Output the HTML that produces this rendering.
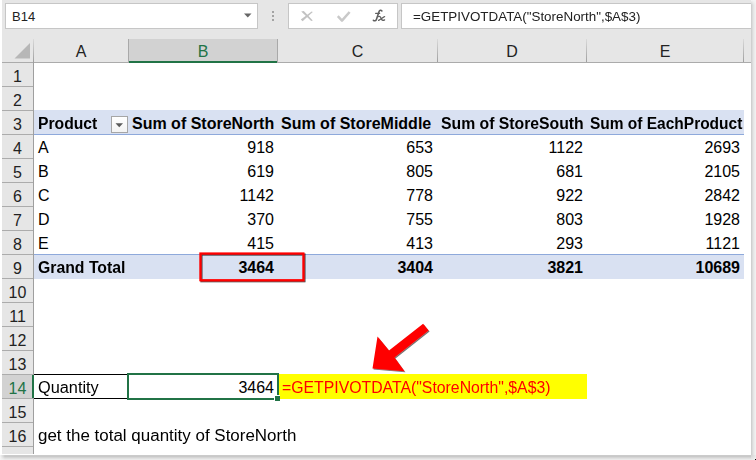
<!DOCTYPE html><html><head><meta charset="utf-8"><style>
html,body{margin:0;padding:0;width:756px;height:460px;overflow:hidden;background:#fff;}
#r{position:absolute;left:0;top:0;width:756px;height:460px;overflow:hidden;}
</style></head><body><div id="r">
<div style="position:absolute;left:2px;top:0px;width:749px;height:39px;background:#e6e6e6;"></div>
<div style="position:absolute;left:5px;top:3px;width:251px;height:24px;border:1px solid #c6c6c6;background:#fff"></div>
<div style="position:absolute;left:12px;transform-origin:0 0;top:10px;font:normal 13px/13px 'Liberation Sans',sans-serif;color:#222;white-space:nowrap;">B14</div>
<svg style="position:absolute;left:243px;top:12px" width="10" height="7"><path d="M1 1.5 L8.5 1.5 L4.75 5.5 Z" fill="#666"/></svg>
<div style="position:absolute;left:272px;top:11px;width:2px;height:2px;background:#a3a3a3;"></div>
<div style="position:absolute;left:272px;top:15px;width:2px;height:2px;background:#a3a3a3;"></div>
<div style="position:absolute;left:272px;top:19px;width:2px;height:2px;background:#a3a3a3;"></div>
<div style="position:absolute;left:288px;top:3px;width:108px;height:24px;border:1px solid #c6c6c6;background:#fff"></div>
<svg style="position:absolute;left:0;top:0" width="400" height="30"><path d="M301.2 11.6 L303.8 11.0 L312.8 20.4 L311.2 21.1 Z" fill="#c2c2c2"/><path d="M312.8 11.9 L311.6 11.4 L300.8 19.6 L302.6 21.2 Z" fill="#c2c2c2"/><path d="M337.8 16.2 L342 20.6 L349.6 12" stroke="#c9c9c9" stroke-width="2.5" fill="none" stroke-linejoin="round"/></svg>
<svg style="position:absolute;left:368px;top:6px" width="22" height="18"><g fill="none" stroke="#5f5f5f" stroke-linecap="round"><path d="M13.9 4.9 C13.1 3.9 11.6 4.0 11.1 5.5 L8.4 13.5 C7.9 14.9 6.4 15.1 5.4 14.3" stroke-width="1.6"/><path d="M7.6 7.3 L11.7 7.3" stroke-width="1.2"/><path d="M10.6 10.6 C11.6 10.2 12.4 10.7 12.9 11.8 L13.8 13.6 C14.3 14.6 15.4 14.6 16.6 13.9" stroke-width="1.3"/><path d="M16.6 10.6 C15.6 10.7 13.6 12.6 10.6 14.4" stroke-width="1.3"/></g></svg>
<div style="position:absolute;left:401px;top:3px;width:349px;height:24px;border:1px solid #c6c6c6;border-right:none;background:#fff"></div>
<div style="position:absolute;left:413px;transform-origin:0 0;top:10px;font:normal 13px/13px 'Liberation Sans',sans-serif;color:#222;white-space:nowrap;transform:scaleX(1.03);">=GETPIVOTDATA("StoreNorth",$A$3)</div>
<div style="position:absolute;left:2px;top:39px;width:749px;height:23px;background:#e6e6e6;"></div>
<div style="position:absolute;left:2px;top:62px;width:749px;height:1px;background:#ababab;"></div>
<svg style="position:absolute;left:13px;top:42px" width="19" height="18"><path d="M1.5 16.5 L17 16.5 L17 1 Z" fill="#b7b7b7"/></svg>
<div style="position:absolute;left:129px;top:39px;width:148px;height:22px;background:#d2d2d2;"></div>
<div style="position:absolute;left:128px;top:61px;width:150px;height:2px;background:#217346;"></div>
<div style="position:absolute;left:437px;top:39px;width:1px;height:23px;background:linear-gradient(to bottom,#dadada,#9f9f9f)"></div>
<div style="position:absolute;left:586px;top:39px;width:1px;height:23px;background:linear-gradient(to bottom,#dadada,#9f9f9f)"></div>
<div style="position:absolute;left:743px;top:39px;width:1px;height:23px;background:linear-gradient(to bottom,#dadada,#9f9f9f)"></div>
<div style="position:absolute;left:128px;top:39px;width:1px;height:24px;background:#a9a9a9;"></div>
<div style="position:absolute;left:277px;top:39px;width:1px;height:24px;background:#a9a9a9;"></div>
<div style="position:absolute;left:34px;width:94px;top:44px;text-align:center;font:16px/16px 'Liberation Sans',sans-serif;color:#222">A</div>
<div style="position:absolute;left:129px;width:148px;top:44px;text-align:center;font:16px/16px 'Liberation Sans',sans-serif;color:#217346">B</div>
<div style="position:absolute;left:278px;width:159px;top:44px;text-align:center;font:16px/16px 'Liberation Sans',sans-serif;color:#222">C</div>
<div style="position:absolute;left:438px;width:148px;top:44px;text-align:center;font:16px/16px 'Liberation Sans',sans-serif;color:#222">D</div>
<div style="position:absolute;left:587px;width:156px;top:44px;text-align:center;font:16px/16px 'Liberation Sans',sans-serif;color:#222">E</div>
<div style="position:absolute;left:2px;top:63px;width:31px;height:391px;background:#e6e6e6;"></div>
<div style="position:absolute;left:33px;top:39px;width:1px;height:23px;background:linear-gradient(to bottom,#dadada,#9f9f9f)"></div>
<div style="position:absolute;left:33px;top:62px;width:1px;height:392px;background:#9f9f9f;"></div>
<div style="position:absolute;left:2px;top:86px;width:31px;height:1px;background:#acacac;"></div>
<div style="position:absolute;left:2px;top:110px;width:31px;height:1px;background:#acacac;"></div>
<div style="position:absolute;left:2px;top:134px;width:31px;height:1px;background:#acacac;"></div>
<div style="position:absolute;left:2px;top:158px;width:31px;height:1px;background:#acacac;"></div>
<div style="position:absolute;left:2px;top:182px;width:31px;height:1px;background:#acacac;"></div>
<div style="position:absolute;left:2px;top:206px;width:31px;height:1px;background:#acacac;"></div>
<div style="position:absolute;left:2px;top:230px;width:31px;height:1px;background:#acacac;"></div>
<div style="position:absolute;left:2px;top:254px;width:31px;height:1px;background:#acacac;"></div>
<div style="position:absolute;left:2px;top:278px;width:31px;height:1px;background:#acacac;"></div>
<div style="position:absolute;left:2px;top:302px;width:31px;height:1px;background:#acacac;"></div>
<div style="position:absolute;left:2px;top:326px;width:31px;height:1px;background:#acacac;"></div>
<div style="position:absolute;left:2px;top:350px;width:31px;height:1px;background:#acacac;"></div>
<div style="position:absolute;left:2px;top:374px;width:31px;height:1px;background:#acacac;"></div>
<div style="position:absolute;left:2px;top:398px;width:31px;height:1px;background:#acacac;"></div>
<div style="position:absolute;left:2px;top:422px;width:31px;height:1px;background:#acacac;"></div>
<div style="position:absolute;left:2px;top:446px;width:31px;height:1px;background:#acacac;"></div>
<div style="position:absolute;left:2px;top:375px;width:30px;height:23px;background:#d2d2d2;"></div>
<div style="position:absolute;left:32px;top:375px;width:2px;height:23px;background:#217346;"></div>
<div style="position:absolute;left:2px;width:31px;top:69px;text-align:center;font:16px/16px 'Liberation Sans',sans-serif;color:#222">1</div>
<div style="position:absolute;left:2px;width:31px;top:93px;text-align:center;font:16px/16px 'Liberation Sans',sans-serif;color:#222">2</div>
<div style="position:absolute;left:2px;width:31px;top:117px;text-align:center;font:16px/16px 'Liberation Sans',sans-serif;color:#222">3</div>
<div style="position:absolute;left:2px;width:31px;top:141px;text-align:center;font:16px/16px 'Liberation Sans',sans-serif;color:#222">4</div>
<div style="position:absolute;left:2px;width:31px;top:165px;text-align:center;font:16px/16px 'Liberation Sans',sans-serif;color:#222">5</div>
<div style="position:absolute;left:2px;width:31px;top:189px;text-align:center;font:16px/16px 'Liberation Sans',sans-serif;color:#222">6</div>
<div style="position:absolute;left:2px;width:31px;top:213px;text-align:center;font:16px/16px 'Liberation Sans',sans-serif;color:#222">7</div>
<div style="position:absolute;left:2px;width:31px;top:237px;text-align:center;font:16px/16px 'Liberation Sans',sans-serif;color:#222">8</div>
<div style="position:absolute;left:2px;width:31px;top:261px;text-align:center;font:16px/16px 'Liberation Sans',sans-serif;color:#222">9</div>
<div style="position:absolute;left:2px;width:31px;top:285px;text-align:center;font:16px/16px 'Liberation Sans',sans-serif;color:#222">10</div>
<div style="position:absolute;left:2px;width:31px;top:309px;text-align:center;font:16px/16px 'Liberation Sans',sans-serif;color:#222">11</div>
<div style="position:absolute;left:2px;width:31px;top:333px;text-align:center;font:16px/16px 'Liberation Sans',sans-serif;color:#222">12</div>
<div style="position:absolute;left:2px;width:31px;top:357px;text-align:center;font:16px/16px 'Liberation Sans',sans-serif;color:#222">13</div>
<div style="position:absolute;left:2px;width:31px;top:381px;text-align:center;font:16px/16px 'Liberation Sans',sans-serif;color:#217346">14</div>
<div style="position:absolute;left:2px;width:31px;top:405px;text-align:center;font:16px/16px 'Liberation Sans',sans-serif;color:#222">15</div>
<div style="position:absolute;left:2px;width:31px;top:429px;text-align:center;font:16px/16px 'Liberation Sans',sans-serif;color:#222">16</div>
<div style="position:absolute;left:2px;top:454px;width:749px;height:1px;background:#ffffff;"></div>
<div style="position:absolute;left:34px;top:110px;width:710px;height:24px;background:#d9e1f2;"></div>
<div style="position:absolute;left:34px;top:134px;width:710px;height:1px;background:#8ea9db;"></div>
<div style="position:absolute;left:34px;top:254px;width:710px;height:1px;background:#8ea9db;"></div>
<div style="position:absolute;left:34px;top:255px;width:710px;height:24px;background:#d9e1f2;"></div>
<div style="position:absolute;left:111px;top:116px;width:15px;height:15px;border:1px solid #a6a6a6;background:linear-gradient(#ffffff,#f3f3f3)"></div>
<svg style="position:absolute;left:115px;top:122px" width="9" height="7"><path d="M0.5 1.2 L8 1.2 L4.25 5.3 Z" fill="#5a5a5a"/></svg>
<div style="position:absolute;left:38px;transform-origin:0 0;top:116px;font:bold 16px/16px 'Liberation Sans',sans-serif;color:#000;white-space:nowrap;transform:scaleX(0.98);">Product</div>
<div style="position:absolute;left:132px;transform-origin:0 0;top:116px;font:bold 16px/16px 'Liberation Sans',sans-serif;color:#000;white-space:nowrap;">Sum of StoreNorth</div>
<div style="position:absolute;left:281px;transform-origin:0 0;top:116px;font:bold 16px/16px 'Liberation Sans',sans-serif;color:#000;white-space:nowrap;">Sum of StoreMiddle</div>
<div style="position:absolute;left:441px;transform-origin:0 0;top:116px;font:bold 16px/16px 'Liberation Sans',sans-serif;color:#000;white-space:nowrap;transform:scaleX(0.985);">Sum of StoreSouth</div>
<div style="position:absolute;left:590px;transform-origin:0 0;top:116px;font:bold 16px/16px 'Liberation Sans',sans-serif;color:#000;white-space:nowrap;transform:scaleX(0.968);">Sum of EachProduct</div>
<div style="position:absolute;left:38px;transform-origin:0 0;top:140px;font:normal 16px/16px 'Liberation Sans',sans-serif;color:#000;white-space:nowrap;">A</div>
<div style="position:absolute;right:482px;transform-origin:100% 0;top:140px;font:normal 16px/16px 'Liberation Sans',sans-serif;color:#000;white-space:nowrap;">918</div>
<div style="position:absolute;right:323px;transform-origin:100% 0;top:140px;font:normal 16px/16px 'Liberation Sans',sans-serif;color:#000;white-space:nowrap;">653</div>
<div style="position:absolute;right:173px;transform-origin:100% 0;top:140px;font:normal 16px/16px 'Liberation Sans',sans-serif;color:#000;white-space:nowrap;">1122</div>
<div style="position:absolute;right:16px;transform-origin:100% 0;top:140px;font:normal 16px/16px 'Liberation Sans',sans-serif;color:#000;white-space:nowrap;">2693</div>
<div style="position:absolute;left:38px;transform-origin:0 0;top:164px;font:normal 16px/16px 'Liberation Sans',sans-serif;color:#000;white-space:nowrap;">B</div>
<div style="position:absolute;right:482px;transform-origin:100% 0;top:164px;font:normal 16px/16px 'Liberation Sans',sans-serif;color:#000;white-space:nowrap;">619</div>
<div style="position:absolute;right:323px;transform-origin:100% 0;top:164px;font:normal 16px/16px 'Liberation Sans',sans-serif;color:#000;white-space:nowrap;">805</div>
<div style="position:absolute;right:173px;transform-origin:100% 0;top:164px;font:normal 16px/16px 'Liberation Sans',sans-serif;color:#000;white-space:nowrap;">681</div>
<div style="position:absolute;right:16px;transform-origin:100% 0;top:164px;font:normal 16px/16px 'Liberation Sans',sans-serif;color:#000;white-space:nowrap;">2105</div>
<div style="position:absolute;left:38px;transform-origin:0 0;top:188px;font:normal 16px/16px 'Liberation Sans',sans-serif;color:#000;white-space:nowrap;">C</div>
<div style="position:absolute;right:482px;transform-origin:100% 0;top:188px;font:normal 16px/16px 'Liberation Sans',sans-serif;color:#000;white-space:nowrap;">1142</div>
<div style="position:absolute;right:323px;transform-origin:100% 0;top:188px;font:normal 16px/16px 'Liberation Sans',sans-serif;color:#000;white-space:nowrap;">778</div>
<div style="position:absolute;right:173px;transform-origin:100% 0;top:188px;font:normal 16px/16px 'Liberation Sans',sans-serif;color:#000;white-space:nowrap;">922</div>
<div style="position:absolute;right:16px;transform-origin:100% 0;top:188px;font:normal 16px/16px 'Liberation Sans',sans-serif;color:#000;white-space:nowrap;">2842</div>
<div style="position:absolute;left:38px;transform-origin:0 0;top:212px;font:normal 16px/16px 'Liberation Sans',sans-serif;color:#000;white-space:nowrap;">D</div>
<div style="position:absolute;right:482px;transform-origin:100% 0;top:212px;font:normal 16px/16px 'Liberation Sans',sans-serif;color:#000;white-space:nowrap;">370</div>
<div style="position:absolute;right:323px;transform-origin:100% 0;top:212px;font:normal 16px/16px 'Liberation Sans',sans-serif;color:#000;white-space:nowrap;">755</div>
<div style="position:absolute;right:173px;transform-origin:100% 0;top:212px;font:normal 16px/16px 'Liberation Sans',sans-serif;color:#000;white-space:nowrap;">803</div>
<div style="position:absolute;right:16px;transform-origin:100% 0;top:212px;font:normal 16px/16px 'Liberation Sans',sans-serif;color:#000;white-space:nowrap;">1928</div>
<div style="position:absolute;left:38px;transform-origin:0 0;top:236px;font:normal 16px/16px 'Liberation Sans',sans-serif;color:#000;white-space:nowrap;">E</div>
<div style="position:absolute;right:482px;transform-origin:100% 0;top:236px;font:normal 16px/16px 'Liberation Sans',sans-serif;color:#000;white-space:nowrap;">415</div>
<div style="position:absolute;right:323px;transform-origin:100% 0;top:236px;font:normal 16px/16px 'Liberation Sans',sans-serif;color:#000;white-space:nowrap;">413</div>
<div style="position:absolute;right:173px;transform-origin:100% 0;top:236px;font:normal 16px/16px 'Liberation Sans',sans-serif;color:#000;white-space:nowrap;">293</div>
<div style="position:absolute;right:16px;transform-origin:100% 0;top:236px;font:normal 16px/16px 'Liberation Sans',sans-serif;color:#000;white-space:nowrap;">1121</div>
<div style="position:absolute;left:38px;transform-origin:0 0;top:260px;font:bold 16px/16px 'Liberation Sans',sans-serif;color:#000;white-space:nowrap;transform:scaleX(0.987);">Grand Total</div>
<div style="position:absolute;right:482px;transform-origin:100% 0;top:260px;font:bold 16px/16px 'Liberation Sans',sans-serif;color:#000;white-space:nowrap;">3464</div>
<div style="position:absolute;right:323px;transform-origin:100% 0;top:260px;font:bold 16px/16px 'Liberation Sans',sans-serif;color:#000;white-space:nowrap;">3404</div>
<div style="position:absolute;right:173px;transform-origin:100% 0;top:260px;font:bold 16px/16px 'Liberation Sans',sans-serif;color:#000;white-space:nowrap;">3821</div>
<div style="position:absolute;right:16px;transform-origin:100% 0;top:260px;font:bold 16px/16px 'Liberation Sans',sans-serif;color:#000;white-space:nowrap;">10689</div>
<svg style="position:absolute;left:0;top:0" width="756" height="460"><defs><filter id="sh2" x="-10%" y="-10%" width="130%" height="130%"><feGaussianBlur in="SourceAlpha" stdDeviation="0.6"/><feOffset dx="1.3" dy="1.3"/><feComponentTransfer><feFuncA type="linear" slope="0.75"/></feComponentTransfer><feMerge><feMergeNode/><feMergeNode in="SourceGraphic"/></feMerge></filter></defs><rect filter="url(#sh2)" x="200.4" y="253.5" width="103" height="26.7" fill="none" stroke="#ff0000" stroke-width="2.2"/></svg>
<div style="position:absolute;left:34px;top:374px;width:94px;height:1px;background:#000;"></div>
<div style="position:absolute;left:34px;top:398px;width:94px;height:1px;background:#000;"></div>
<div style="position:absolute;left:278px;top:374px;width:309px;height:25px;background:#ffff00;"></div>
<div style="position:absolute;left:38px;transform-origin:0 0;top:380px;font:normal 16px/16px 'Liberation Sans',sans-serif;color:#000;white-space:nowrap;transform:scaleX(1.02);">Quantity</div>
<div style="position:absolute;right:482px;transform-origin:100% 0;top:380px;font:normal 16px/16px 'Liberation Sans',sans-serif;color:#000;white-space:nowrap;">3464</div>
<div style="position:absolute;left:282px;transform-origin:0 0;top:380px;font:normal 16px/16px 'Liberation Sans',sans-serif;color:#ff0000;white-space:nowrap;transform:scaleX(0.988);">=GETPIVOTDATA("StoreNorth",$A$3)</div>
<div style="position:absolute;left:127px;top:373px;width:148px;height:23px;border:2px solid #217346"></div>
<div style="position:absolute;left:274px;top:395px;width:6px;height:7px;background:#ffffff;"></div>
<div style="position:absolute;left:275px;top:396px;width:5px;height:5px;background:#217346;"></div>
<div style="position:absolute;left:38px;transform-origin:0 0;top:428px;font:normal 16px/16px 'Liberation Sans',sans-serif;color:#000;white-space:nowrap;transform:scaleX(1.06);">get the total quantity of StoreNorth</div>
<svg style="position:absolute;left:0;top:0" width="756" height="460"><defs><filter id="sh" x="-20%" y="-20%" width="150%" height="150%"><feGaussianBlur in="SourceAlpha" stdDeviation="0.6"/><feOffset dx="1.3" dy="1.3"/><feComponentTransfer><feFuncA type="linear" slope="0.55"/></feComponentTransfer><feMerge><feMergeNode/><feMergeNode in="SourceGraphic"/></feMerge></filter></defs>
<polygon filter="url(#sh)" fill="#ff0000" points="423.1,323.8 428.6,330.5 394.5,357.5 404.5,371.2 372.5,368.5 377.5,336.5 389,350.5"/></svg>
<div style="position:absolute;left:751px;top:0;width:1px;height:455px;background:linear-gradient(to bottom,#f5f5f5,#cfcfcf 5px,#cfcfcf)"></div>
<div style="position:absolute;left:752px;top:0;width:1px;height:455px;background:linear-gradient(to bottom,#f5f5f5,#dbdbdb 5px,#dbdbdb)"></div>
<div style="position:absolute;left:753px;top:0;width:1px;height:455px;background:linear-gradient(to bottom,#f5f5f5,#e5e5e5 5px,#e5e5e5)"></div>
<div style="position:absolute;left:754px;top:0;width:1px;height:455px;background:linear-gradient(to bottom,#f5f5f5,#ebebeb 5px,#ebebeb)"></div>
<div style="position:absolute;left:755px;top:0;width:1px;height:455px;background:linear-gradient(to bottom,#f5f5f5,#f0f0f0 5px,#f0f0f0)"></div>
<div style="position:absolute;left:0;top:455px;width:751px;height:1px;background:linear-gradient(to right,#f5f5f5,#cbcbcb 5px,#cbcbcb)"></div>
<div style="position:absolute;left:0;top:456px;width:751px;height:1px;background:linear-gradient(to right,#f5f5f5,#c9c9c9 5px,#c9c9c9)"></div>
<div style="position:absolute;left:0;top:457px;width:751px;height:1px;background:linear-gradient(to right,#f5f5f5,#d5d5d5 5px,#d5d5d5)"></div>
<div style="position:absolute;left:0;top:458px;width:751px;height:1px;background:linear-gradient(to right,#f5f5f5,#e0e0e0 5px,#e0e0e0)"></div>
<div style="position:absolute;left:0;top:459px;width:751px;height:1px;background:linear-gradient(to right,#f5f5f5,#eaeaea 5px,#eaeaea)"></div>
<div style="position:absolute;left:751px;top:455px;width:5px;height:5px;background:radial-gradient(circle at 0 0,#d2d2d2,#e4e4e4 50%,#f3f3f3 90%)"></div>
<div style="position:absolute;left:755px;top:459px;width:1px;height:1px;background:#000;"></div>
</div></body></html>
